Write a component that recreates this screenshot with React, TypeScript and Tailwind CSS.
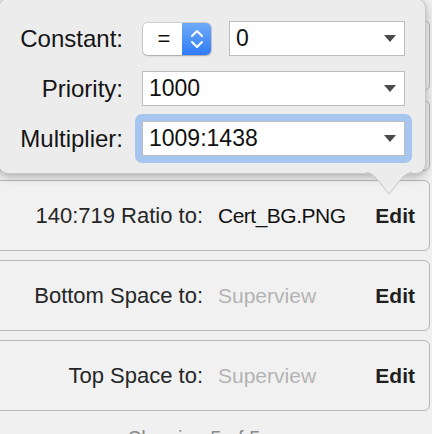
import React from "react";

const font = { fontFamily: '"Liberation Sans", Arial, sans-serif' };

function Caret() {
  return (
    <svg width="12" height="7" viewBox="0 0 12 7" className="shrink-0">
      <path d="M0 0 L12 0 L6 7 Z" fill="#4a4a4a" />
    </svg>
  );
}

function Field({ value, width }: { value: string; width: string }) {
  return (
    <div
      className={`${width} h-[35px] flex items-center justify-between bg-white border border-[#bcbcbc] pl-[6px] pr-[8px] text-[23px] text-[#111]`}
    >
      <span>{value}</span>
      <Caret />
    </div>
  );
}

function Stepper() {
  return (
    <div className="flex w-[68px] h-[32px] rounded-[5px] overflow-hidden shadow-[0_0_0_1px_rgba(0,0,0,0.12),0_1px_2px_rgba(0,0,0,0.2)]">
      <div className="w-[39px] bg-white flex items-center justify-center text-[22px] text-[#111] pl-[3px]">
        =
      </div>
      <div className="w-[29px] bg-gradient-to-b from-[#6eaaf8] to-[#2f7bf5] flex items-center justify-center">
        <svg width="14" height="20" viewBox="0 0 14 20">
          <path d="M2 7 L7 2 L12 7" stroke="white" strokeWidth="2" fill="none" strokeLinecap="round" strokeLinejoin="round" />
          <path d="M2 13 L7 18 L12 13" stroke="white" strokeWidth="2" fill="none" strokeLinecap="round" strokeLinejoin="round" />
        </svg>
      </div>
    </div>
  );
}

function Card({ label, value, muted }: { label?: string; value?: string; muted?: boolean }) {
  return (
    <div className="ml-[-8px] w-[438px] h-[71px] shrink-0 flex items-center border border-[#b7b7b7] rounded-[6px] bg-[#f1f1f1]">
      <div className="w-[210px] text-right text-[#262626] text-[22px]">{label}</div>
      <div
        className={`ml-[15px] flex-1 text-[21px] ${muted ? "text-[#b4b4b4]" : "text-[#111] tracking-[-0.5px]"}`}
      >
        {value}
      </div>
      {label && <div className="font-bold text-[21px] text-[#1f1f1f] pr-[14px]">Edit</div>}
    </div>
  );
}

export default function App() {
  return (
    <div className="relative w-[432px] h-[434px] overflow-hidden bg-[#f0f0f0]" style={font}>
      <div className="flex flex-col gap-[9px] pt-[20px]">
        <Card />
        <Card />
        <Card label="140:719 Ratio to:" value="Cert_BG.PNG" />
        <Card label="Bottom Space to:" value="Superview" muted />
        <Card label="Top Space to:" value="Superview" muted />
        <div className="mt-[6px] text-[20px] leading-[24px] text-[#8a8a8a] pl-[128px]">Showing 5 of 5</div>
      </div>

      <div className="absolute left-[-2px] top-[-2px] w-[428px] h-[176px] rounded-[10px] border border-[#c6c6c6] bg-[#ececec] shadow-[0_3px_10px_rgba(0,0,0,0.28)]">
        <svg className="absolute left-[365px] top-[173px]" width="50" height="24" viewBox="0 0 50 24">
          <path d="M0 0 C10 0 16 12 25 22 C34 12 40 0 50 0 Z" fill="#ececec" />
          <path d="M2 0.5 C11 1 16 12 25 22 C34 12 39 1 48 0.5" fill="none" stroke="#c4c4c4" strokeWidth="1" />
        </svg>
        <div className="flex flex-col pt-[22px] gap-[15px]">
          <div className="flex items-center h-[35px]">
            <div className="w-[124px] text-right text-[24px] text-[#151515]">Constant:</div>
            <div className="ml-[20px]">
              <Stepper />
            </div>
            <div className="ml-[18px]">
              <Field value="0" width="w-[176px]" />
            </div>
          </div>
          <div className="flex items-center h-[35px]">
            <div className="w-[124px] text-right text-[24px] text-[#151515]">Priority:</div>
            <div className="ml-[19px]">
              <Field value="1000" width="w-[263px]" />
            </div>
          </div>
          <div className="flex items-center h-[35px]">
            <div className="w-[124px] text-right text-[24px] text-[#151515]">Multiplier:</div>
            <div className="ml-[12px] p-[7px] rounded-[7px] bg-[#a6c6ef]">
              <Field value="1009:1438" width="w-[263px]" />
            </div>
          </div>
        </div>
      </div>
    </div>
  );
}
